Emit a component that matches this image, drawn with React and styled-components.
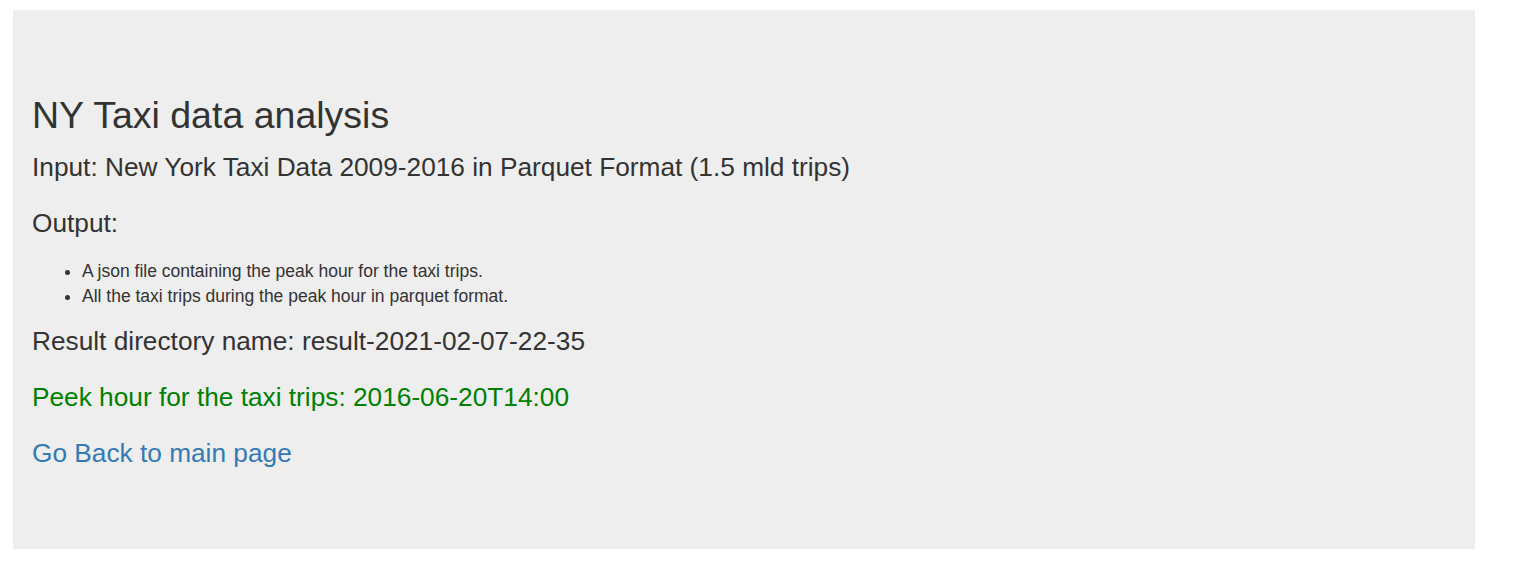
import React from "react";
import styled, { createGlobalStyle } from "styled-components";

const GlobalStyle = createGlobalStyle`
  * { box-sizing: border-box; }
  body {
    margin: 0;
    font-family: "Liberation Sans", Arial, Helvetica, sans-serif;
    font-size: 17.5px;
    line-height: 1.42857;
    color: #333;
    background: #fff;
  }
`;

const Page = styled.div`
  padding: 10px 43px 0 13px;
`;

const Jumbotron = styled.section`
  background: #eee;
  padding: 37.5px 19px 58px;
`;

const Title = styled.h2`
  font-size: 37.5px;
  font-weight: 500;
  line-height: 1.1;
  margin: 47.5px 0 12.5px;
`;

const Lead = styled.p`
  font-size: 26.25px;
  font-weight: 200;
  margin: 0 0 18.75px;
  color: ${(p) => p.$color || "inherit"};
`;

const List = styled.ul`
  margin: -2px 0 13.5px;
  padding-left: 50px;
`;

const Item = styled.li`
  line-height: 25px;
`;

const Link = styled.a`
  color: #337ab7;
  text-decoration: none;
`;

const App = () => {
  return (
    <>
      <GlobalStyle />
      <Page>
        <Jumbotron>
          <Title>NY Taxi data analysis</Title>
          <Lead>
            Input: New York Taxi Data 2009-2016 in Parquet Format (1.5 mld
            trips)
          </Lead>
          <Lead>Output:</Lead>
          <List>
            <Item>A json file containing the peak hour for the taxi trips.</Item>
            <Item>All the taxi trips during the peak hour in parquet format.</Item>
          </List>
          <Lead>Result directory name: result-2021-02-07-22-35</Lead>
          <Lead $color="green">
            Peek hour for the taxi trips: 2016-06-20T14:00
          </Lead>
          <Lead>
            <Link href="#">Go Back to main page</Link>
          </Lead>
        </Jumbotron>
      </Page>
    </>
  );
};

export default App;
